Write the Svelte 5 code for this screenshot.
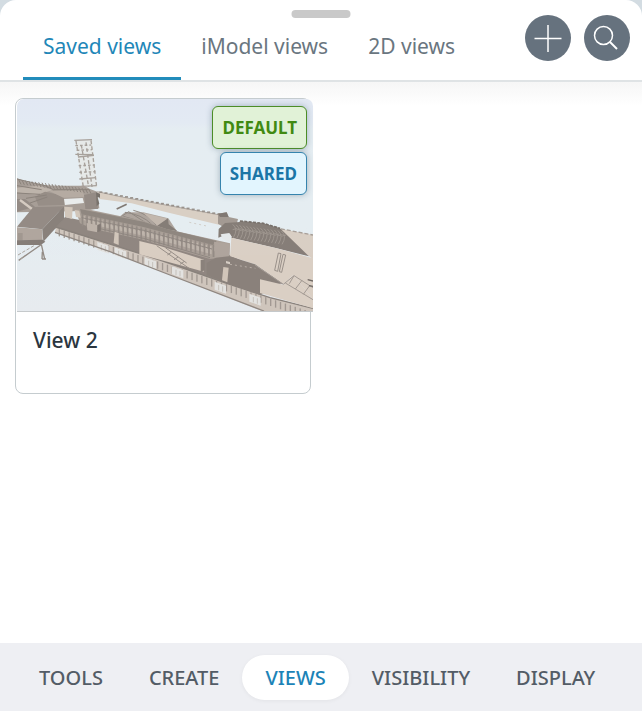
<script>
  const tabs = ['Saved views', 'iModel views', '2D views'];
  const sections = ['TOOLS', 'CREATE', 'VIEWS', 'VISIBILITY', 'DISPLAY'];

  let currentTab = $state('Saved views');
  let currentSection = $state('VIEWS');

  // Repeated parts of the station model: posts and windows along a sloping edge
  const along = (count, x1, y1, x2, y2) =>
    Array.from({ length: count }, (_, i) => ({
      x: x1 + ((x2 - x1) * i) / (count - 1),
      y: y1 + ((y2 - y1) * i) / (count - 1)
    }));

  const hallPosts = along(30, 215, 356, 608, 448);
  const platformPosts = along(52, 146, 402, 898, 650);
  const farPosts = along(24, 268, 289, 622, 355);
  const leftRibs = along(22, 26, 254, 236, 282);
  const roofRibs = along(15, 660, 388, 806, 408);
  const brightPanels = [
    [262, 440], [314, 457], [404, 487], [486, 514], [614, 560], [718, 596]
  ];
</script>

<div class="sheet">
  <header>
    <span class="handle"></span>
    <div class="tabs" role="tablist">
      {#each tabs as tab}
        <button
          class="tab"
          role="tab"
          aria-selected={tab === currentTab}
          class:active={tab === currentTab}
          onclick={() => (currentTab = tab)}
        >{tab}</button>
      {/each}
    </div>
    <div class="actions">
      <button class="round" aria-label="Add view">
        <svg viewBox="0 0 46 46"><path d="M23 10V37M9.500 23.500H36.500" /></svg>
      </button>
      <button class="round" aria-label="Search views">
        <svg viewBox="0 0 46 46">
          <circle cx="19.500" cy="20.500" r="9" />
          <path d="M26 27L33 34" stroke-width="2" />
        </svg>
      </button>
    </div>
  </header>

  <main>
    <article class="card">
      <svg class="thumb" viewBox="21 12 888 636" preserveAspectRatio="none" aria-hidden="true">
        <defs>
          <linearGradient id="sky" x1="0" y1="0" x2="0" y2="1">
            <stop offset="0" stop-color="#e2e8f3" />
            <stop offset="0.110" stop-color="#e3eaf3" />
            <stop offset="0.140" stop-color="#e5edf2" />
            <stop offset="0.600" stop-color="#e5edf1" />
            <stop offset="1" stop-color="#e7ebef" />
          </linearGradient>
        </defs>
        <rect x="21" y="12" width="888" height="640" fill="url(#sky)" />

        <g class="model">
          <!-- tower -->
          <path d="M196 134H246L262 278H216Z" fill="#e6e8e7" />
          <g fill="none" stroke="#a09892" stroke-width="4">
            <path d="M193 136L246 134M196 178L250 179M204 186L252 181M208 252L258 248M214 274L260 272" />
            <path stroke-dasharray="11 7" d="M198 138L220 276M214 150L236 276M228 142L246 276M243 136L260 276" />
            <path stroke-dasharray="8 6" d="M196 152L244 150M200 166L246 164M206 212L254 210M208 232L256 230" />
          </g>

          <!-- far wing -->
          <path d="M262 290L330 305L630 360V390L470 352L365 325L268 312Z" fill="#d8cbbf" />
          <path d="M262 290L330 305L630 360" stroke="#aaa098" stroke-width="3" fill="none" />
          {#each farPosts as p}
            <rect x={p.x} y={p.y} width="9" height="5" fill="#8f867f" />
          {/each}
          <path d="M795 398L909 420V492L895 482L825 425Z" fill="#d8cbbf" />
          <path d="M795 398L909 420" stroke="#a0968e" stroke-width="4" stroke-dasharray="12 6" />
          <path d="M320 342L350 328" stroke="#766d67" stroke-width="5" />
          <path d="M538 382L590 393" stroke="#cfcac5" stroke-width="3" stroke-dasharray="6 9" />

          <!-- left wing -->
          <path d="M21 250L55 262L105 270L140 272L222 272L240 282L262 290L268 340L225 348L21 352Z" fill="#a0958d" />
          <path d="M21 278L85 272L130 285L75 300L21 292Z" fill="#b9ada3" />
          <path d="M75 305L105 290L162 302V330L85 332Z" fill="#8e837c" />
          <path d="M118 288L215 285L225 305L160 308Z" fill="#b0a49a" />
          <path d="M162 312L218 309L222 324L165 330Z" fill="#e9ecec" />
          <path d="M21 312L45 312L75 335L21 350Z" fill="#8b8079" />
          <path d="M30 315L66 342" stroke="#d3c7bc" stroke-width="7" />
          <path d="M21 252L105 272L130 284H236M21 272L95 284M21 294L90 298M48 310L110 300M60 324L112 306" stroke="#81776f" stroke-width="3" fill="none" />
          {#each leftRibs as p}
            <path d="M{p.x} {p.y}l7 14" stroke="#81776f" stroke-width="3" />
          {/each}
          <path d="M222 300L258 292L264 342H226Z" fill="#8b8079" />
          <path d="M258 292l12 4v12l-8 -2l6 20l-8 8z" fill="#6c645e" />

          <!-- platform -->
          <path d="M135 400L165 366L400 415L660 480L820 560L750 600L905 644H770Z" fill="#877c75" />
          <path d="M138 398L300 447L450 495L650 565L780 608L909 640V650H762L480 540L300 470L135 412Z" fill="#cdc1b7" />
          {#each platformPosts as p}
            <rect x={p.x} y={p.y} width="4" height="22" fill="#9a9088" />
          {/each}
          {#each brightPanels as [x, y]}
            <path d="M{x} {y}l34 12v24l-34 -12z" fill="#e3e2df" />
            <path d="M{x + 12} {y + 10}v16M{x + 24} {y + 14}v16" stroke="#c3bcb5" stroke-width="3" />
          {/each}
          <path d="M138 396L300 447L450 495L650 565L780 608L909 640" stroke="#7f766f" stroke-width="4" fill="none" />
          <path d="M135 412L300 470L480 540L762 648" stroke="#877d76" stroke-width="4" fill="none" />

          <!-- canopy -->
          <path d="M320 372L345 352L400 352L475 370L500 408L440 398Z" fill="#a89d95" />
          <path d="M326 370L356 350L410 385M345 352Q395 358 425 388M370 346Q415 356 438 390M340 364L388 378" stroke="#877d76" stroke-width="3" fill="none" />
          <path d="M400 354L474 371L442 392Z" fill="#bfb2a7" />
          <path d="M440 394L474 370L476 388L502 408L460 404Z" fill="#7a706a" />

          <!-- main hall -->
          <path d="M196 342L240 344L400 378L470 402L660 445L658 485L600 492L390 432L250 402L210 385Z" fill="#a3978e" />
          <path d="M210 342L400 380L470 402L620 438L608 450L400 396L215 358Z" fill="#867c74" />
          <path d="M225 374L400 410L605 465V478L400 422L235 386Z" fill="#b9ada3" />
          {#each hallPosts as p}
            <rect x={p.x} y={p.y} width="5" height="38" fill="#8b8079" />
            <rect x={p.x + 6} y={p.y + 8} width="4" height="12" fill="#bcb0a6" />
          {/each}
          <path d="M215 368L400 406L606 462M230 392L400 430L600 488" stroke="#877d76" stroke-width="3" fill="none" />
          <path d="M612 440L660 446L658 482L616 488Z" fill="#a99d94" />
          <path d="M388 438L450 453L582 494V530L500 508L388 478Z" fill="#d8cabd" />
          <path d="M440 452L540 522M466 458L530 504M484 472l-12 8M504 486l-12 8M522 500l-12 8" stroke="#8f857d" stroke-width="3" fill="none" />
          <path d="M572 494h12v32l-12 6z" fill="#81766f" />

          <!-- blocks on the deck -->
          <path d="M163 335L188 337L186 372L165 366ZM194 345L208 347L212 368L198 366Z" fill="#cfc1b4" />
          <path d="M230 384L262 390V412L232 406Z" fill="#b9aca2" />
          <path d="M262 390l10 -4v22l-10 4z" fill="#766c66" />
          <path d="M314 410L326 414V450L311 444Z" fill="#cfc1b4" />

          <!-- right building -->
          <path d="M624 356L650 352L656 366L684 372L680 388L640 396L624 386Z" fill="#9c9189" />
          <path d="M624 356L650 352L656 366H630Z" fill="#756b65" />
          <path d="M626 402L645 384L700 380L668 430L660 418L640 422L625 428Z" fill="#7b716a" />
          <path d="M632 418l26 -4l6 10l-6 16l-20 -8z" fill="#e5e8e9" />
          <path d="M664 428L690 378L760 385L810 400L897 484L800 460Z" fill="#7c726b" />
          {#each roofRibs as p}
            <path d="M{p.x + 8} {p.y}q18 14 2 40M{p.x + 22} {p.y + 12}l-14 4" stroke="#978d85" stroke-width="3" fill="none" />
          {/each}
          <path d="M690 378L760 385L810 400" stroke="#6b625c" stroke-width="5" stroke-dasharray="9 4" fill="none" />
          <path d="M664 428L800 460L909 490V612L850 540L820 568L735 508L660 484Z" fill="#d9ccc0" />
          <path d="M590 504L618 488L658 484L735 508L820 568L750 553V600L650 564L590 540Z" fill="#81766f" />
          <path d="M660 508L736 520" stroke="#b3a89f" stroke-width="3" stroke-dasharray="6 9" />
          <path d="M640 516L656 518L652 562L636 556Z" fill="#cfc1b4" />
          <path d="M648 498l12 3v7l-12 -3z" fill="#d5cac0" />
          <path d="M750 553L820 569L850 540L909 612V640L750 594Z" fill="#d9ccc0" />
          <path d="M805 474L794 526L803 529L813 476ZM819 478L808 530L815 532L827 480Z" fill="none" stroke="#91877f" stroke-width="3" />
          <path d="M735 510L820 568L852 542L909 578M826 564L909 614M852 542L838 566M876 556L856 582M899 572L880 598" stroke="#9c928a" stroke-width="3" fill="none" />
          <path d="M893 554l16 4M897 572l12 2" stroke="#625a54" stroke-width="4" />

          <!-- left block -->
          <path d="M21 395L70 336L162 334L97 403Z" fill="#8b8079" />
          <path d="M21 397L97 403L98 437L21 437Z" fill="#aa9e95" />
          <path d="M97 403L162 334V372L100 440Z" fill="#7f756e" />
          <path d="M24 414h14v22h-14z" fill="#998e86" />
          <path d="M21 436L98 434L106 440L92 450H21Z" fill="#7a706a" />
          <path d="M26 496L92 450M94 448L104 492M97 470L96 492M96 492H108" stroke="#8a8079" stroke-width="4" fill="none" />
          <path d="M24 480L72 452M30 494l14 -12" stroke="#a59c95" stroke-width="3" stroke-dasharray="10 5" />
        </g>
      </svg>
      <div class="badges">
        <span class="badge default">DEFAULT</span>
        <span class="badge shared">SHARED</span>
      </div>
      <h2>View 2</h2>
    </article>
  </main>

  <nav>
    {#each sections as section}
      <button
        class="section"
        class:active={section === currentSection}
        onclick={() => (currentSection = section)}
      >{section}</button>
    {/each}
  </nav>
</div>

<style>
  :global(body) {
    background: #d3dce2;
  }

  .sheet {
    display: flex;
    flex-direction: column;
    min-height: 100vh;
    overflow: hidden;
    border-radius: 16px 16px 0 0;
    background: #fff;
    font-family: 'Noto Sans', 'Open Sans', sans-serif;
  }

  button {
    border: 0;
    background: none;
    font-family: inherit;
    cursor: pointer;
  }

  header {
    position: relative;
    display: flex;
    justify-content: space-between;
    height: 80px;
    padding: 0 12px 0 23px;
    border-bottom: 2px solid #dfe3e5;
  }

  /* drag handle lies over the header */
  .handle {
    position: absolute;
    top: 10px;
    left: 50%;
    width: 59px;
    height: 8px;
    border-radius: 4px;
    background: #c9c9c9;
    transform: translateX(-50%);
  }

  .tabs {
    display: flex;
  }

  .tab {
    padding: 14px 20px 0;
    border-bottom: 3px solid transparent;
    color: #6a767f;
    font-size: 21px;
    line-height: 30px;
    white-space: nowrap;
  }

  .tab.active {
    border-color: #228cbb;
    color: #1f87b8;
  }

  .actions {
    display: flex;
    gap: 13px;
    padding-top: 15px;
  }

  .round {
    width: 46px;
    height: 46px;
    padding: 0;
    border-radius: 50%;
    background: #66727e;
  }

  .round svg {
    display: block;
    fill: none;
    stroke: #fff;
    stroke-width: 1.500;
  }

  main {
    flex: 1;
    display: grid;
    grid-template-columns: repeat(auto-fill, minmax(280px, 1fr));
    align-content: start;
    gap: 20px;
    padding: 16px 15px;
    background: linear-gradient(#f6f6f6, #fff 24px);
  }

  .card {
    position: relative;
    padding-left: 1px;
    border: 1px solid #c5cccf;
    border-radius: 8px;
    background: #fff;
  }

  .thumb {
    display: block;
    width: calc(100% + 3px);
    height: auto;
    border-bottom: 1px solid #c5c9cb;
    border-top-left-radius: 7px;
    border-top-right-radius: 7px;
  }

  .model {
    opacity: 0.9;
  }

  .badges {
    position: absolute;
    top: 7px;
    right: 3px;
    display: flex;
    flex-direction: column;
    align-items: flex-end;
    gap: 3px;
  }

  .badge {
    padding: 9px;
    border: 1px solid;
    border-radius: 6px;
    box-shadow: 0 0 6px rgba(60, 90, 110, 0.4);
    font-size: 17px;
    font-weight: 700;
    line-height: 23px;
  }

  .default {
    border-color: #4c8d27;
    background: #e1f2d7;
    color: #418a12;
  }

  .shared {
    border-color: #3584ae;
    background: #e2f5fe;
    color: #1b76a6;
  }

  h2 {
    margin: 0;
    padding: 13px 16px 38px;
    color: #2b3640;
    font-size: 21px;
    font-weight: 500;
    line-height: 30px;
  }

  nav {
    display: flex;
    padding: 12px 16px 11px;
    background: #eeeff3;
  }

  .section {
    padding: 0 23px;
    border-radius: 23px;
    color: #535c66;
    font-size: 20px;
    font-weight: 500;
    line-height: 45px;
  }

  .section.active {
    background: #fff;
    box-shadow: 0 1px 4px rgba(0, 0, 0, 0.05);
    color: #1c83b7;
  }
</style>
